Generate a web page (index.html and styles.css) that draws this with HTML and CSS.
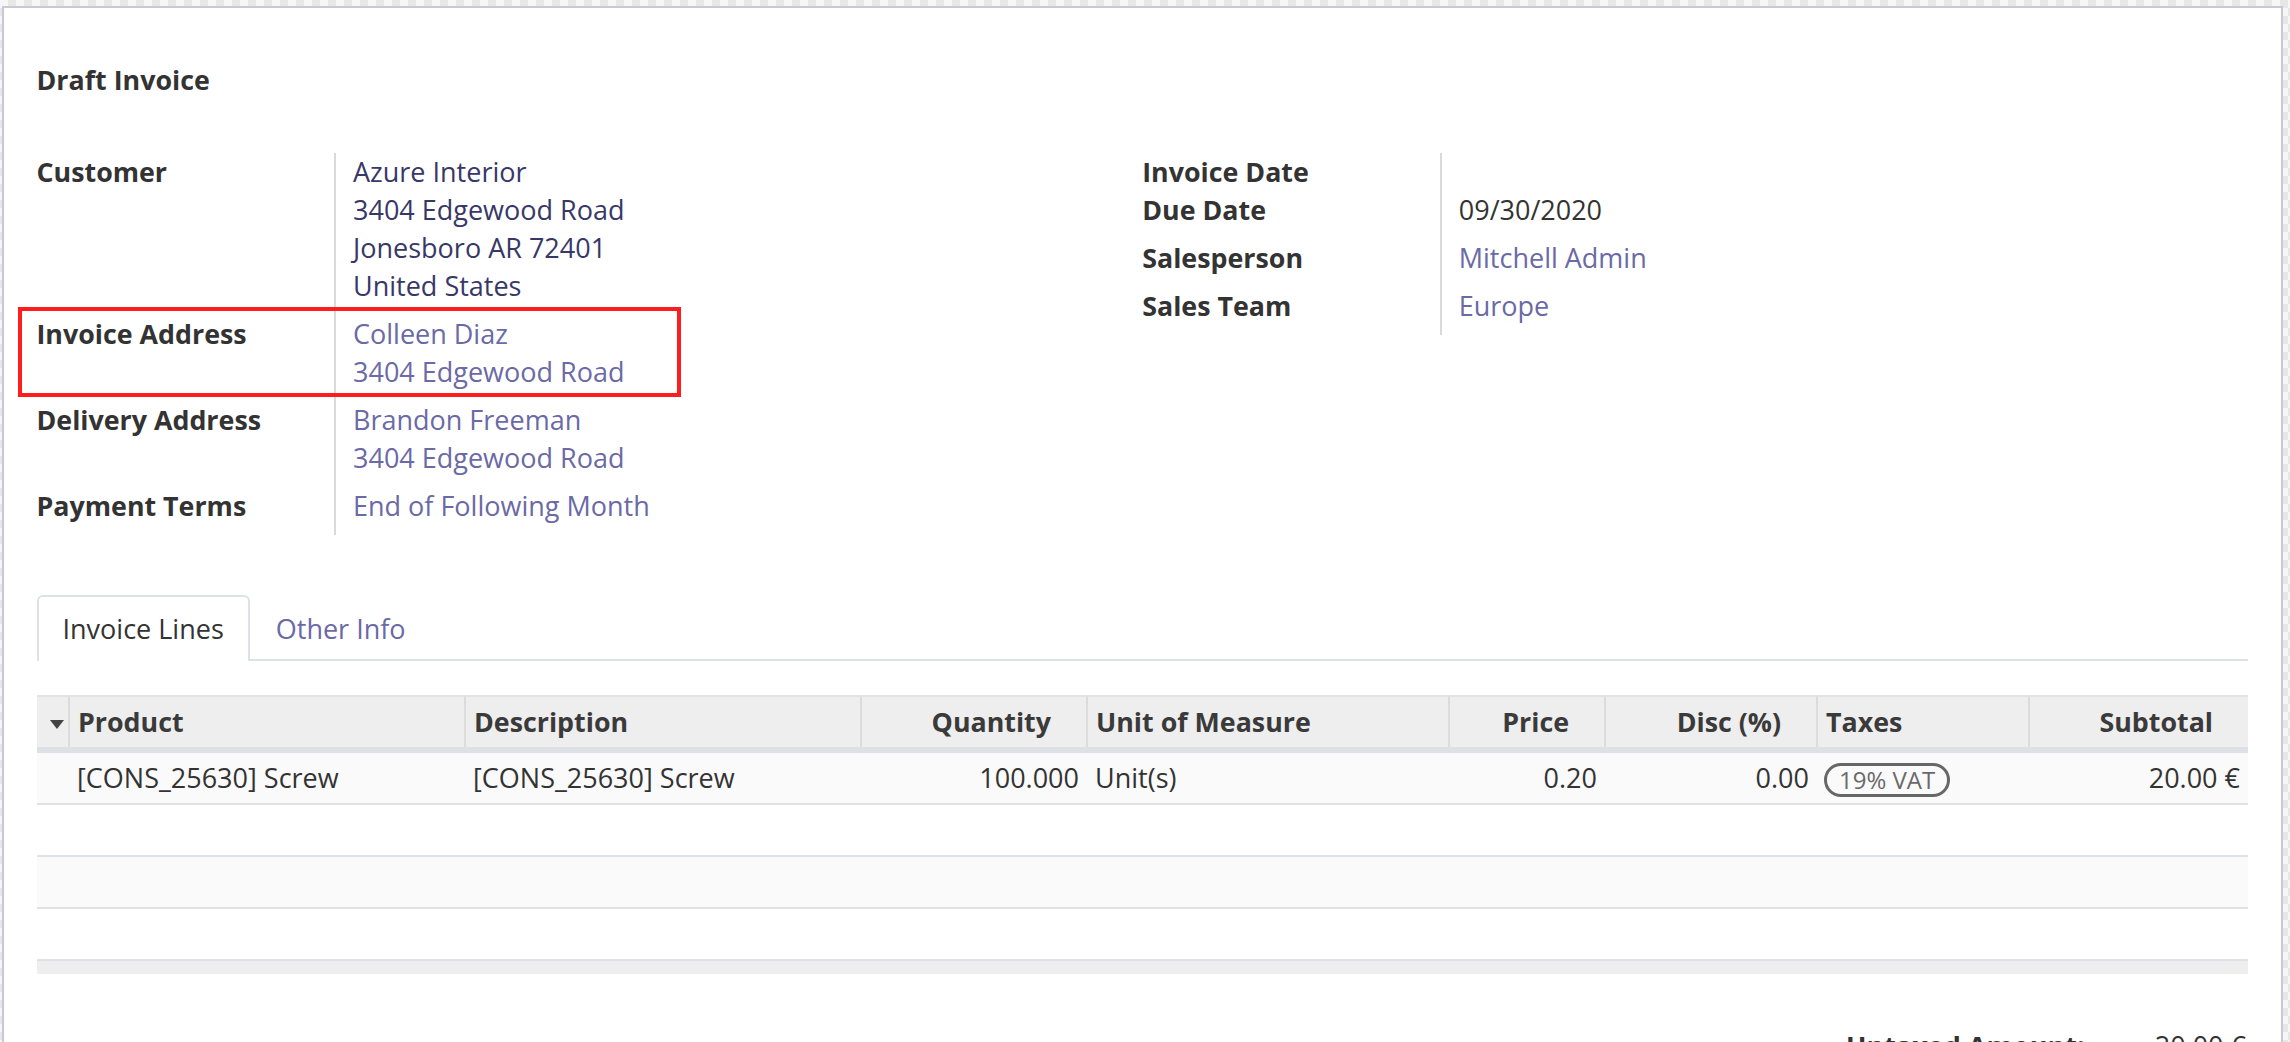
FILE: index.html
```html
<!DOCTYPE html>
<html>
<head>
<meta charset="utf-8">
<title>Draft Invoice</title>
<link rel="stylesheet" href="styles.css">
</head>
<body>
<div class="sheet">
  <div class="title">Draft Invoice</div>

  <div class="groups">
    <div class="group">
      <div class="lbl pad">Customer</div>
      <div class="val pad">
        <div class="dark">Azure Interior</div>
        <div class="dark">3404 Edgewood Road</div>
        <div class="dark">Jonesboro AR 72401</div>
        <div class="dark">United States</div>
      </div>
      <div class="lbl pad">Invoice Address</div>
      <div class="val pad">
        <div class="link">Colleen Diaz</div>
        <div class="link">3404 Edgewood Road</div>
      </div>
      <div class="lbl pad">Delivery Address</div>
      <div class="val pad">
        <div class="link">Brandon Freeman</div>
        <div class="link">3404 Edgewood Road</div>
      </div>
      <div class="lbl pad">Payment Terms</div>
      <div class="val pad"><span class="link">End of Following Month</span></div>
    </div>
    <div class="group">
      <div class="lbl">Invoice Date</div>
      <div class="val"></div>
      <div class="lbl pad">Due Date</div>
      <div class="val pad">09/30/2020</div>
      <div class="lbl pad">Salesperson</div>
      <div class="val pad"><span class="link">Mitchell Admin</span></div>
      <div class="lbl pad">Sales Team</div>
      <div class="val pad"><span class="link">Europe</span></div>
    </div>
  </div>

  <div class="tabs">
    <div class="tab active">Invoice Lines</div>
    <div class="tab">Other Info</div>
  </div>

  <table class="lines">
    <colgroup>
      <col class="c-handle"><col class="c-product"><col class="c-desc"><col class="c-qty"><col class="c-uom"><col class="c-price"><col class="c-disc"><col class="c-tax"><col class="c-sub">
    </colgroup>
    <thead>
      <tr>
        <th class="handle"><span class="caret"></span></th>
        <th>Product</th>
        <th>Description</th>
        <th class="num">Quantity</th>
        <th>Unit of Measure</th>
        <th class="num">Price</th>
        <th class="num">Disc (%)</th>
        <th>Taxes</th>
        <th class="num">Subtotal</th>
      </tr>
    </thead>
    <tbody>
      <tr>
        <td></td>
        <td>[CONS_25630] Screw</td>
        <td>[CONS_25630] Screw</td>
        <td class="num">100.000</td>
        <td>Unit(s)</td>
        <td class="num">0.20</td>
        <td class="num">0.00</td>
        <td class="tax"><span class="badge">19% VAT</span></td>
        <td class="num">20.00 €</td>
      </tr>
      <tr class="empty"><td colspan="9"></td></tr>
      <tr class="empty"><td colspan="9"></td></tr>
      <tr class="empty"><td colspan="9"></td></tr>
    </tbody>
    <tfoot>
      <tr><td colspan="9"></td></tr>
    </tfoot>
  </table>

  <div class="totals">
    <div class="tot-label">Untaxed Amount:</div>
    <div class="tot-value">20.00 €</div>
  </div>

  <div class="highlight"></div>
</div>
</body>
</html>
```
FILE: styles.css
```css
html, body {
  margin: 0;
  padding: 0;
  height: 100%;
  overflow: hidden;
}
body {
  background-color: #f1f1f1;
  background-image: repeating-conic-gradient(#e7e7e7 0 25%, #f6f6f6 0 50%);
  background-size: 16px 16px;
  font-family: "Open Sans", "Liberation Sans", sans-serif;
  font-size: 27px;
  line-height: 38px;
  color: #333333;
}
.sheet {
  margin: 6px 7px 0 2px;
  border: 2px solid #c8c8d6;
  border-bottom: none;
  background: #ffffff;
  padding: 53px 33px 40px 32.5px;
  min-height: 1100px;
  position: relative;
}
.title {
  font-weight: 700;
  font-size: 26.8px;
  color: #333333;
}
.groups {
  margin-top: 54px;
  display: grid;
  grid-template-columns: 1fr 1fr;
  align-items: start;
}
.group {
  display: grid;
  grid-template-columns: 299.5px 1fr;
}
.lbl {
  font-weight: 700;
  font-size: 26.8px;
  color: #333333;
  border-right: 2px solid #dadada;
}
.val {
  padding-left: 17px;
  color: #333333;
}
.pad {
  padding-bottom: 10px;
}
.dark {
  color: #383868;
}
.link {
  color: #6b69a6;
}
.tabs {
  margin-top: 60px;
  display: flex;
  border-bottom: 2px solid #dee2e6;
}
.tab {
  padding: 13px 24px 11px 24px;
  border: 2px solid transparent;
  border-bottom: none;
  color: #6b69a6;
  margin-bottom: -2px;
}
.tab.active {
  color: #333333;
  border-color: #dee2e6;
  border-radius: 6px 6px 0 0;
  background: #ffffff;
  padding-bottom: 13px;
}
.lines {
  margin-top: 34px;
  width: 100%;
  table-layout: fixed;
  border-collapse: collapse;
}
.c-handle { width: 32.5px; }
.c-product { width: 396px; }
.c-desc { width: 396px; }
.c-qty { width: 226px; }
.c-uom { width: 362px; }
.c-price { width: 156px; }
.c-disc { width: 212px; }
.c-tax { width: 212px; }
.c-sub { width: 219px; }
.lines th {
  background: #eeeeee;
  height: 50px;
  padding: 0 8px;
  text-align: left;
  font-weight: 700;
  font-size: 26.8px;
  color: #3a3a3a;
  border-top: 2px solid #e3e3e3;
  border-left: 2px solid #dcdcdc;
  border-bottom: 6px solid #dde1e5;
  white-space: nowrap;
  overflow: hidden;
}
.lines th.handle {
  border-left: none;
  padding: 0 0 0 13px;
  text-align: left;
}
.lines th.num {
  text-align: right;
  padding-right: 35px;
}
.caret {
  display: inline-block;
  width: 0;
  height: 0;
  border-left: 7px solid transparent;
  border-right: 7px solid transparent;
  border-top: 9px solid #444444;
  vertical-align: middle;
}
.lines td {
  height: 50px;
  padding: 0 8px;
  border-bottom: 2px solid #dee2e6;
  white-space: nowrap;
  color: #333333;
}
.lines tbody tr:first-child td {
  height: 50px;
  background: #fafafa;
}
.lines tbody tr:nth-child(3) td {
  background: #fafafa;
}
.lines td.num {
  text-align: right;
}
.lines td.tax {
  padding-left: 7px;
}
.badge {
  display: inline-block;
  border: 3px solid #676767;
  border-radius: 20px;
  color: #6a6a6a;
  font-size: 24px;
  line-height: 28px;
  padding: 0 12px;
  vertical-align: middle;
}
.lines tfoot td {
  height: 13px;
  padding: 0;
  background: #eeeeee;
  border-bottom: none;
}
.totals {
  margin-top: 53px;
  display: flex;
  justify-content: flex-end;
  gap: 70px;
  padding-right: 2px;
}
.tot-label {
  font-weight: 700;
}
.tot-value {
  text-align: right;
}
.highlight {
  position: absolute;
  left: 13.5px;
  top: 299px;
  width: 663px;
  height: 90px;
  box-sizing: border-box;
  border: 4px solid #ff1c1c;
}
```
